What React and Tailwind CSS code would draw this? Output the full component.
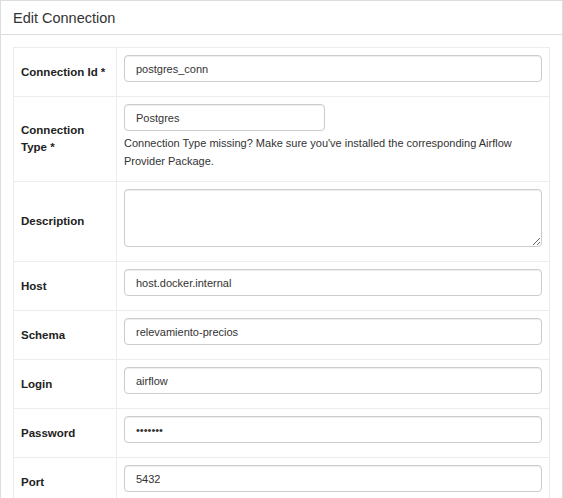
import React from "react";

const font = { fontFamily: '"Liberation Sans", Arial, sans-serif' };

// simple read-only field styled like a bootstrap form-control
function Field({ value, type = "text", className = "w-full" }) {
  return (
    <input
      readOnly
      type={type}
      value={value}
      className={`block h-[27px] rounded-[4px] border border-[#cccccc] bg-white px-[11px] text-[11px] text-[#333333] shadow-[inset_0_1px_1px_rgba(0,0,0,0.075)] outline-none ${className}`}
    />
  );
}

function Row({ label, children, cell = "pb-[14px]" }) {
  return (
    <tr className="border-t border-[#ececec]">
      <td className="w-[103px] border-r border-[#ececec] px-[7px] align-middle text-[11.5px] font-bold leading-[17px] text-[#222222]">
        {label}
      </td>
      <td className={`px-[7px] pt-[7px] align-top ${cell}`}>{children}</td>
    </tr>
  );
}

export default function App() {
  return (
    <div style={font} className="h-[498px] w-[563px] overflow-hidden bg-white">
      <div className="border border-[#dddddd] bg-white">
        <div className="h-[34px] border-b border-[#dddddd] pl-[12px] pt-[9px] text-[14.5px] leading-[16px] text-[#333333]">
          Edit Connection
        </div>
        <div className="px-[12px] pt-[12px]">
          <table className="w-[537px] border-collapse border border-[#ececec]">
            <tbody>
              <Row label="Connection Id *">
                <Field value="postgres_conn" />
              </Row>
              <Row label={<>Connection<br />Type *</>} cell="pb-[11px]">
                <Field value="Postgres" className="w-[201px]" />
                <p className="mt-[3px] text-[11px] leading-[18px] text-[#333333]">
                  Connection Type missing? Make sure you've installed the corresponding Airflow Provider Package.
                </p>
              </Row>
              <Row label="Description">
                <textarea
                  readOnly
                  className="block h-[58px] w-full rounded-[4px] border border-[#cccccc] bg-white px-[11px] py-[6px] text-[11px] shadow-[inset_0_1px_1px_rgba(0,0,0,0.075)] outline-none"
                />
              </Row>
              <Row label="Host">
                <Field value="host.docker.internal" />
              </Row>
              <Row label="Schema">
                <Field value="relevamiento-precios" />
              </Row>
              <Row label="Login">
                <Field value="airflow" />
              </Row>
              <Row label="Password">
                <Field value="airflow" type="password" />
              </Row>
              <Row label="Port">
                <Field value="5432" />
              </Row>
            </tbody>
          </table>
        </div>
      </div>
    </div>
  );
}
